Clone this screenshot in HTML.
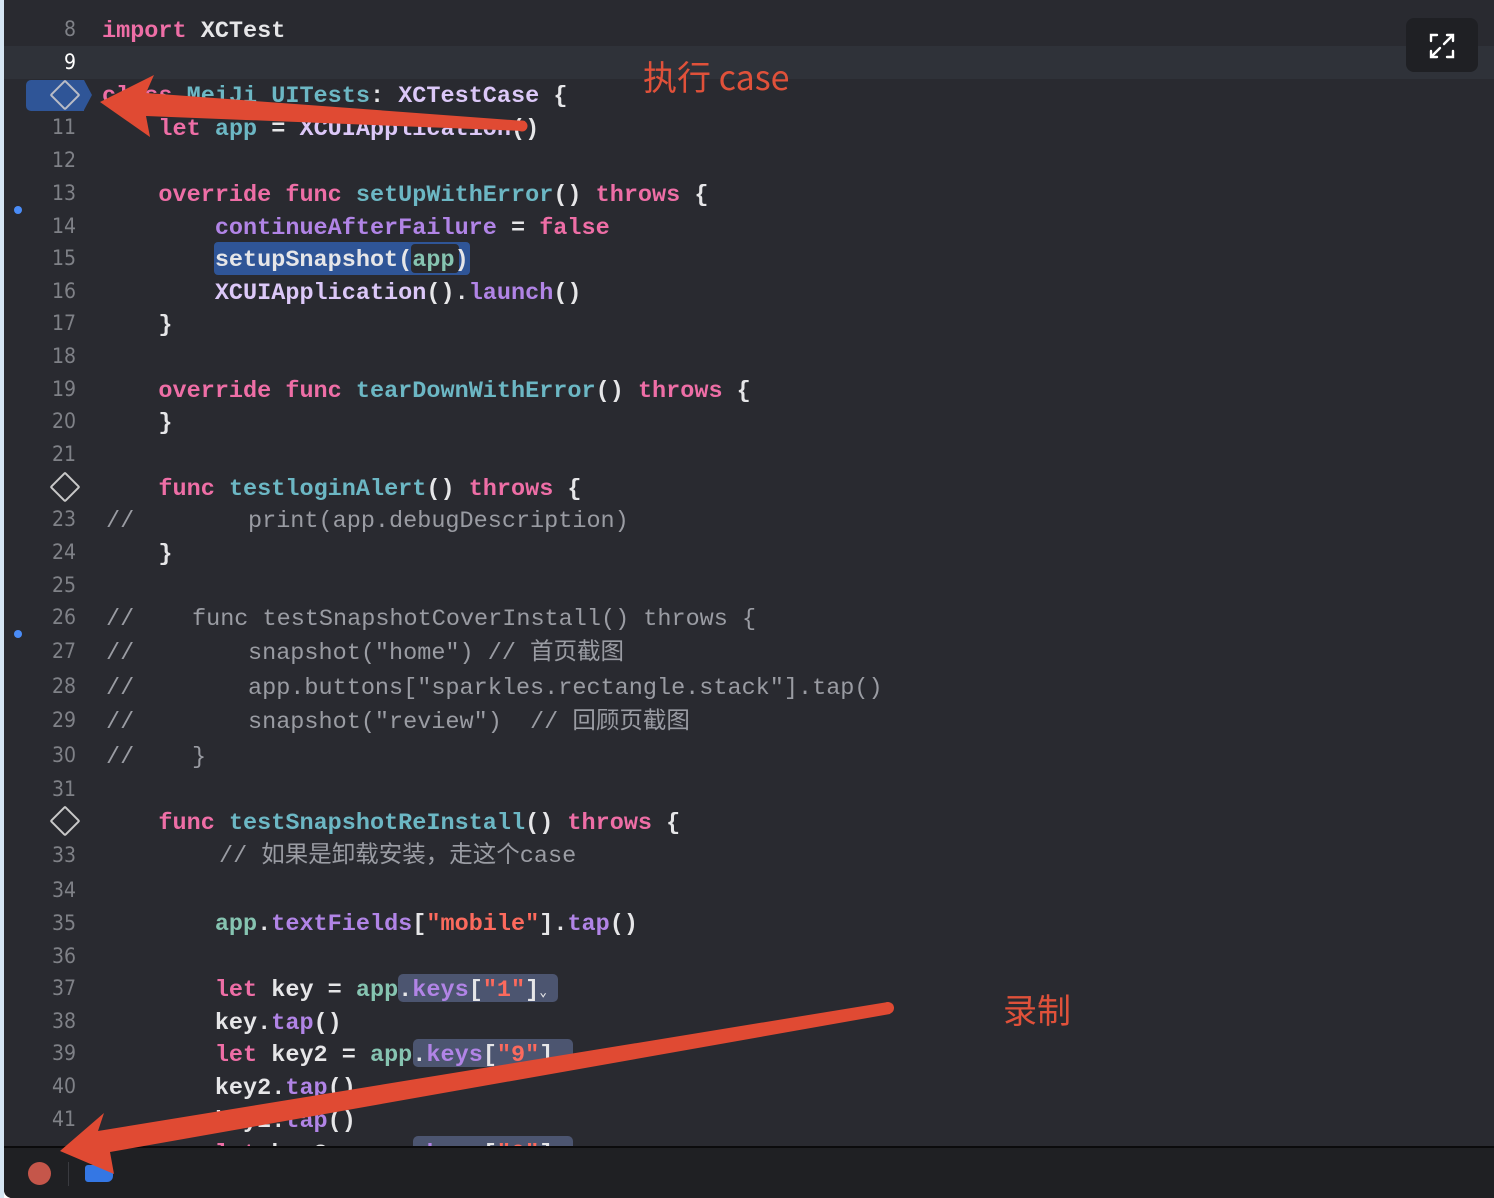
<!DOCTYPE html>
<html><head><meta charset="utf-8"><style>
html,body{margin:0;padding:0;}
body{width:1494px;height:1198px;background:#fff;position:relative;overflow:hidden;}
#ed{position:absolute;left:4px;top:0;width:1490px;height:1198px;background:#292a30;border-bottom-left-radius:8px;overflow:hidden;}
#lb{position:absolute;left:0;top:0;width:4px;height:1198px;background:#d6e6f3;}
.cur{position:absolute;left:0;top:46px;width:1490px;height:33px;background:#2f3239;}
.ln{position:absolute;left:0;width:72px;text-align:right;font:21px "DejaVu Sans Condensed","Liberation Sans",sans-serif;color:#7f8187;}
.c{position:absolute;left:98px;white-space:pre;font:bold 23.5px "Liberation Mono",monospace;color:#e6e6e8;line-height:30px;margin-top:2px;}
.cm{position:absolute;white-space:pre;font:23.5px "Liberation Mono","Noto Sans CJK SC",monospace;color:#9a9ca3;line-height:30px;margin-top:2px;}
.k{color:#ee6ea6}.t{color:#dcc8f8}.f{color:#6cb7c4}.p{color:#b184e6}.s{color:#fc6a5d}.g{color:#86c4b1}
.hl{position:absolute;background:#2f5597;border-radius:4px;}
.hk{position:absolute;background:#4c5570;border-radius:5px;}
.dm{position:absolute;width:18px;height:18px;border:2px solid #c8c8c8;transform:rotate(45deg);border-radius:2px;}
.dot{position:absolute;left:10px;width:8px;height:8px;border-radius:4px;background:#4a8cf7;}
</style></head><body>
<div id="ed">
<div class="cur"></div>
<div style="position:absolute;left:22px;top:80px;width:58px;height:31px;background:#2f5597;border-radius:5px 0 0 5px;"></div>
<div style="position:absolute;left:80px;top:80px;width:0;height:0;border-top:15.5px solid transparent;border-bottom:15.5px solid transparent;border-left:8px solid #2f5597;"></div>
<div class="dm" style="left:50px;top:84px;border-color:#b9bcc6"></div>
<div class="dm" style="left:50px;top:476px"></div>
<div class="dm" style="left:50px;top:810px"></div>
<div class="dot" style="top:206px"></div>
<div class="dot" style="top:630px"></div>

<div class="hl" style="left:210px;top:242px;width:256px;height:33px"></div>
<div style="position:absolute;left:407px;top:244px;width:48px;height:29px;background:#292a30;border-radius:4px"></div>
<div class="hk" style="left:394px;top:974px;width:160px;height:28px"></div>
<div class="hk" style="left:409px;top:1039px;width:160px;height:28px"></div>
<div class="hk" style="left:409px;top:1136px;width:160px;height:28px"></div>

<div class="ln" style="top:17px">8</div><div class="c" style="top:15px"><span class="k">import</span> XCTest</div>
<div class="ln" style="top:50px;color:#fff">9</div>
<div class="c" style="top:80px"><span class="k">class</span> <span class="f">MeiJi_UITests</span>: <span class="t">XCTestCase</span> {</div>
<div class="ln" style="top:115px">11</div><div class="c" style="top:113px">    <span class="k">let</span> <span class="f">app</span> = <span class="t">XCUIApplication</span>()</div>
<div class="ln" style="top:148px">12</div>
<div class="ln" style="top:181px">13</div><div class="c" style="top:179px">    <span class="k">override func</span> <span class="f">setUpWithError</span>() <span class="k">throws</span> {</div>
<div class="ln" style="top:214px">14</div><div class="c" style="top:212px">        <span class="p">continueAfterFailure</span> = <span class="k">false</span></div>
<div class="ln" style="top:246px">15</div><div class="c" style="top:244px">        setupSnapshot(<span class="g">app</span>)</div>
<div class="ln" style="top:279px">16</div><div class="c" style="top:277px">        <span class="t">XCUIApplication</span>().<span class="p">launch</span>()</div>
<div class="ln" style="top:311px">17</div><div class="c" style="top:309px">    }</div>
<div class="ln" style="top:344px">18</div>
<div class="ln" style="top:377px">19</div><div class="c" style="top:375px">    <span class="k">override func</span> <span class="f">tearDownWithError</span>() <span class="k">throws</span> {</div>
<div class="ln" style="top:409px">20</div><div class="c" style="top:407px">    }</div>
<div class="ln" style="top:442px">21</div>
<div class="c" style="top:473px">    <span class="k">func</span> <span class="f">testloginAlert</span>() <span class="k">throws</span> {</div>
<div class="ln" style="top:507px">23</div><div class="cm" style="left:102px;top:505px">//</div><div class="cm" style="left:244px;top:505px">print(app.debugDescription)</div>
<div class="ln" style="top:540px">24</div><div class="c" style="top:538px">    }</div>
<div class="ln" style="top:573px">25</div>
<div class="ln" style="top:605px">26</div><div class="cm" style="left:102px;top:603px">//</div><div class="cm" style="left:188px;top:603px">func testSnapshotCoverInstall() throws {</div>
<div class="ln" style="top:639px">27</div><div class="cm" style="left:102px;top:637px">//</div><div class="cm" style="left:244px;top:637px">snapshot("home") // 首页截图</div>
<div class="ln" style="top:674px">28</div><div class="cm" style="left:102px;top:672px">//</div><div class="cm" style="left:244px;top:672px">app.buttons["sparkles.rectangle.stack"].tap()</div>
<div class="ln" style="top:708px">29</div><div class="cm" style="left:102px;top:706px">//</div><div class="cm" style="left:244px;top:706px">snapshot("review")  // 回顾页截图</div>
<div class="ln" style="top:743px">30</div><div class="cm" style="left:102px;top:741px">//</div><div class="cm" style="left:188px;top:741px">}</div>
<div class="ln" style="top:777px">31</div>
<div class="c" style="top:807px">    <span class="k">func</span> <span class="f">testSnapshotReInstall</span>() <span class="k">throws</span> {</div>
<div class="ln" style="top:843px">33</div><div class="cm" style="left:215px;top:840px">// 如果是卸载安装，走这个case</div>
<div class="ln" style="top:878px">34</div>
<div class="ln" style="top:911px">35</div><div class="c" style="top:908px">        <span class="g">app</span>.<span class="p">textFields</span>[<span class="s">"mobile"</span>].<span class="p">tap</span>()</div>
<div class="ln" style="top:944px">36</div>
<div class="ln" style="top:976px">37</div><div class="c" style="top:974px">        <span class="k">let</span> key = <span class="g">app</span>.<span class="p">keys</span>[<span class="s">"1"</span>]<span style="font-size:13px">⌄</span></div>
<div class="ln" style="top:1009px">38</div><div class="c" style="top:1007px">        key.<span class="p">tap</span>()</div>
<div class="ln" style="top:1041px">39</div><div class="c" style="top:1039px">        <span class="k">let</span> key2 = <span class="g">app</span>.<span class="p">keys</span>[<span class="s">"9"</span>]<span style="font-size:13px">⌄</span></div>
<div class="ln" style="top:1074px">40</div><div class="c" style="top:1072px">        key2.<span class="p">tap</span>()</div>
<div class="ln" style="top:1107px">41</div><div class="c" style="top:1105px">        key2.<span class="p">tap</span>()</div>
<div class="c" style="top:1138px">        <span class="k">let</span> key3 = <span class="g">app</span>.<span class="p">keys</span>[<span class="s">"0"</span>]</div>

<div style="position:absolute;left:1402px;top:18px;width:72px;height:54px;background:#1f2024;border-radius:8px"></div>
<svg style="position:absolute;left:1424px;top:32px" width="28" height="28" viewBox="0 0 28 28" fill="none" stroke="#fff" stroke-width="2.4" stroke-linecap="round"><path d="M3 9V3h6M19 3h6v6M25 19v6h-6M9 25H3v-6M16 12l8-8M12 16l-8 8"/></svg>

<div style="position:absolute;left:0;top:1146px;width:1490px;height:52px;background:#1f2023;border-top:2px solid #0b0b0c"></div>
<div style="position:absolute;left:24px;top:1162px;width:23px;height:23px;border-radius:12px;background:#c5564a"></div>
<div style="position:absolute;left:64px;top:1162px;width:1px;height:24px;background:#3a3b40"></div>
<div style="position:absolute;left:81px;top:1165px;width:28px;height:17px;background:#3477e4;border-radius:3px 9px 6px 3px"></div>

<div style="position:absolute;left:639px;top:52px;font:34px 'Noto Sans CJK SC','Liberation Sans',sans-serif;color:#e0513a;line-height:48px">执行 case</div>
<div style="position:absolute;left:999px;top:985px;font:34px 'Noto Sans CJK SC',sans-serif;color:#e0513a;line-height:48px">录制</div>

<svg style="position:absolute;left:-4px;top:0" width="1494" height="1198">
<g fill="#e04a33">
<polygon points="100,102 154,75 146,93 525,121 524,131 146,116 150,137"/>
<circle cx="522" cy="126" r="5.5"/>
<polygon points="60,1151 104,1113 98,1131 888,1002 890,1014 110,1152 114,1174"/>
<circle cx="888" cy="1008" r="6"/>
</g>
</svg>
</div>
<div id="lb"></div>
</body></html>
